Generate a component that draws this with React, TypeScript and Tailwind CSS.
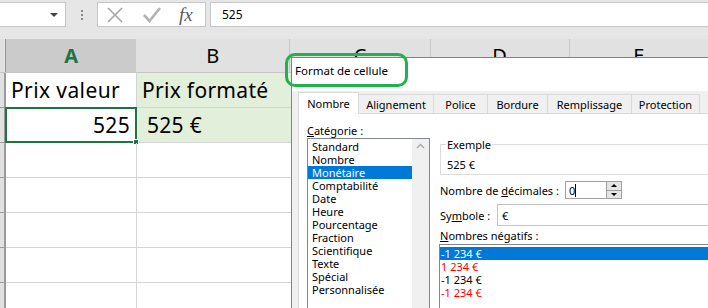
import React from "react";

const sheetFont = { fontFamily: "'Noto Sans', 'Open Sans', sans-serif" };

function Tab({ label, w, active }: { label: string; w: string; active?: boolean }) {
  if (active) {
    return (
      <div className={`${w} h-[22px] -mb-px bg-white border border-b-0 border-[#d9d9d9] flex items-center justify-center pb-[1px]`}>
        {label}
      </div>
    );
  }
  return (
    <div className={`${w} h-[19px] bg-[#f0f0f0] border border-l-0 border-b-0 border-[#d9d9d9] flex items-center justify-center`}>
      {label}
    </div>
  );
}

export default function App() {
  const cats = [
    "Standard",
    "Nombre",
    "Monétaire",
    "Comptabilité",
    "Date",
    "Heure",
    "Pourcentage",
    "Fraction",
    "Scientifique",
    "Texte",
    "Spécial",
    "Personnalisée",
  ];
  const rows = [0, 1, 2, 3, 4, 5, 6];

  return (
    <div className="relative w-[708px] h-[308px] overflow-hidden bg-white text-black" style={sheetFont}>
      {/* Formula bar */}
      <div className="flex h-[29px] items-center bg-[#e6e6e6]">
        <div className="h-[25px] w-[66px] bg-white border border-l-0 border-[#c6c6c6] flex items-center justify-end pr-[7px]">
          <div className="w-0 h-0 border-l-[4px] border-r-[4px] border-t-[4px] border-l-transparent border-r-transparent border-t-[#444]" />
        </div>
        <div className="w-[31px] flex flex-col items-center gap-[2px]">
          <div className="w-[2px] h-[2px] bg-[#8a8a8a]" />
          <div className="w-[2px] h-[2px] bg-[#8a8a8a]" />
          <div className="w-[2px] h-[2px] bg-[#8a8a8a]" />
        </div>
        <div className="h-[25px] w-[109px] bg-white border border-[#c6c6c6] flex items-center">
          <svg width="18" height="18" viewBox="0 0 18 18" className="ml-[8px]">
            <path d="M2 2 L16 16 M16 2 L2 16" stroke="#a6a6a6" strokeWidth="1.6" fill="none" />
          </svg>
          <svg width="20" height="18" viewBox="0 0 20 18" className="ml-[18px]">
            <path d="M2 9 L7.5 15 L18 2" stroke="#b3b3b3" strokeWidth="2.6" fill="none" />
          </svg>
          <span
            className="ml-[17px] italic text-[19px] leading-none text-[#5a5a5a]"
            style={{ fontFamily: "'Liberation Serif', 'DejaVu Serif', serif" }}
          >
            fx
          </span>
        </div>
        <div className="ml-[4px] h-[25px] flex-1 bg-white border border-r-0 border-[#c6c6c6] pl-[11px] flex items-center text-[12px]">
          525
        </div>
      </div>
      <div className="h-[10px] bg-[#e6e6e6]" />

      {/* Column headers */}
      <div className="flex h-[34px] bg-[#e1e1e1] border-b border-[#c6c6c6] text-[20px]">
        <div className="w-[6px] border-r border-[#9b9b9b]" />
        <div className="w-[131px] bg-[#cbcbcb] flex items-center justify-center font-bold text-[#217346]">A</div>
        <div className="w-[154px] flex items-center justify-center">B</div>
        <div className="w-[141px] border-l border-[#c6c6c6] flex items-center justify-center">C</div>
        <div className="w-[140px] border-l border-[#c6c6c6] flex items-center justify-center">D</div>
        <div className="w-[140px] border-l border-[#c6c6c6] flex items-center justify-center">E</div>
      </div>

      {/* Rows */}
      {rows.map((r) => (
        <div key={r} className="flex h-[35px] text-[21px]">
          <div className="w-[6px] bg-[#e1e1e1] border-r-2 border-b border-r-[#9b9b9b] border-b-[#9b9b9b]" />
          <div className="relative w-[131px] border-b border-r border-[#d4d4d4] flex items-center">
            {r === 0 && <span className="pl-[5px] pt-[2px] tracking-[0.4px]">Prix valeur</span>}
            {r === 1 && <span className="ml-auto pr-[6px] pt-[2px] tracking-[0.3px]">525</span>}
            {r === 1 && (
              <div className="absolute -top-[1px] -left-[1px] -right-[1px] -bottom-[1px] border-2 border-[#217346]">
                <div className="absolute -right-[4px] -bottom-[4px] w-[6px] h-[6px] bg-[#217346] border border-white" />
              </div>
            )}
          </div>
          <div
            className={`w-[154px] border-b border-[#d4d4d4] flex items-center ${r < 2 ? "bg-[#e2efda]" : ""}`}
          >
            {r === 0 && <span className="pl-[5px] pt-[2px] tracking-[0.3px]">Prix formaté</span>}
            {r === 1 && <span className="pl-[10px] pt-[2px] tracking-[0.3px]">525 €</span>}
          </div>
          <div className="flex-1 border-b border-[#d4d4d4]" />
        </div>
      ))}

      {/* Dialog */}
      <div
        className="absolute left-[291px] top-[57px] w-[480px] h-[260px] overflow-hidden border-l border-t border-[#4a8fdb] flex flex-col text-[11px] leading-[13px]"
        style={sheetFont}
      >
        <div className="shrink-0 h-[33px] bg-white pl-[3px] pt-[6px] text-[11.5px] leading-[14px]">Format de cellule</div>
        <div className="shrink-0 h-[300px] bg-[#f0f0f0] pl-[6px] pt-[1px] flex flex-col">
          <div className="shrink-0 relative z-10 flex items-end h-[21px]">
            <Tab label="Nombre" w="w-[61px]" active />
            <Tab label="Alignement" w="w-[75px]" />
            <Tab label="Police" w="w-[54px]" />
            <Tab label="Bordure" w="w-[60px]" />
            <Tab label="Remplissage" w="w-[84px]" />
            <Tab label="Protection" w="w-[68px]" />
          </div>
          <div className="flex-1 bg-white border-t border-l border-[#d9d9d9] flex items-start">
            {/* Left column */}
            <div className="pl-[8px] pt-[10px] flex flex-col">
              <div className="h-[14px] leading-[14px]">
                <span className="underline underline-offset-[1px]">C</span>atégorie :
              </div>
              <div className="w-[123px] h-[200px] border border-[#828790] bg-white flex">
                <div className="flex-1 pt-[1px]">
                  {cats.map((c) => (
                    <div
                      key={c}
                      className={`h-[13px] leading-[13px] pl-[4px] ${c === "Monétaire" ? "bg-[#0078d7] text-white" : ""}`}
                    >
                      {c}
                    </div>
                  ))}
                </div>
                <div className="w-[17px] bg-[#f0f0f0] flex justify-center pt-[4px]">
                  <svg width="9" height="6" viewBox="0 0 9 6">
                    <path d="M1 5 L4.5 1.5 L8 5" stroke="#a8a8a8" strokeWidth="1.3" fill="none" />
                  </svg>
                </div>
              </div>
            </div>

            {/* Right column */}
            <div className="ml-[10px] mt-[24px] flex-1 flex flex-col">
              <fieldset className="border border-[#dcdcdc] px-[5px] m-0">
                <legend className="px-[1px] leading-[13px]">Exemple</legend>
                <div className="pt-[7px] pb-[3px] pl-[1px] leading-[13px]">525 €</div>
              </fieldset>

              <div className="mt-[6px] h-[18px] flex items-center">
                <div className="w-[125px]">
                  Nombre de <span className="underline underline-offset-[1px]">d</span>écimales :
                </div>
                <div className="flex h-[18px]">
                  <div className="w-[42px] h-full bg-white border border-[#a0a0a0] flex items-center pl-[3px]">
                    <span>0</span>
                    <span className="w-px h-[13px] bg-black" />
                  </div>
                  <div className="w-[15px] h-full flex flex-col border border-l-0 border-[#a0a0a0]">
                    <div className="flex-1 bg-[#e5e5e5] border-b border-[#a0a0a0] flex items-center justify-center">
                      <div className="w-0 h-0 border-l-[3px] border-r-[3px] border-b-[3px] border-l-transparent border-r-transparent border-b-black" />
                    </div>
                    <div className="flex-1 bg-[#e5e5e5] flex items-center justify-center">
                      <div className="w-0 h-0 border-l-[3px] border-r-[3px] border-t-[3px] border-l-transparent border-r-transparent border-t-black" />
                    </div>
                  </div>
                </div>
              </div>

              <div className="mt-[5px] h-[22px] flex items-center">
                <div className="w-[57px]">
                  Sy<span className="underline underline-offset-[1px]">m</span>bole :
                </div>
                <div className="flex-1 h-full bg-white border border-[#c4c4c4] pl-[4px] flex items-center">€</div>
              </div>

              <div className="mt-[3px] leading-[13px]">
                <span className="underline underline-offset-[1px]">N</span>ombres négatifs :
              </div>
              <div className="mt-[2px] -ml-[1px] h-[80px] border border-[#828790] bg-white pt-[2px]">
                <div className="h-[13px] leading-[13px] bg-[#0078d7] text-white pl-[1px]">-1 234 €</div>
                <div className="h-[13px] leading-[13px] text-[#ff0000] pl-[1px]">1 234 €</div>
                <div className="h-[13px] leading-[13px] pl-[1px]">-1 234 €</div>
                <div className="h-[13px] leading-[13px] text-[#ff0000] pl-[1px]">-1 234 €</div>
              </div>
            </div>
          </div>
        </div>
      </div>

      <div className="absolute left-[285px] top-[53px] w-[123px] h-[34px] border-[3px] border-[#22b14c] rounded-[10px]" />
    </div>
  );
}
